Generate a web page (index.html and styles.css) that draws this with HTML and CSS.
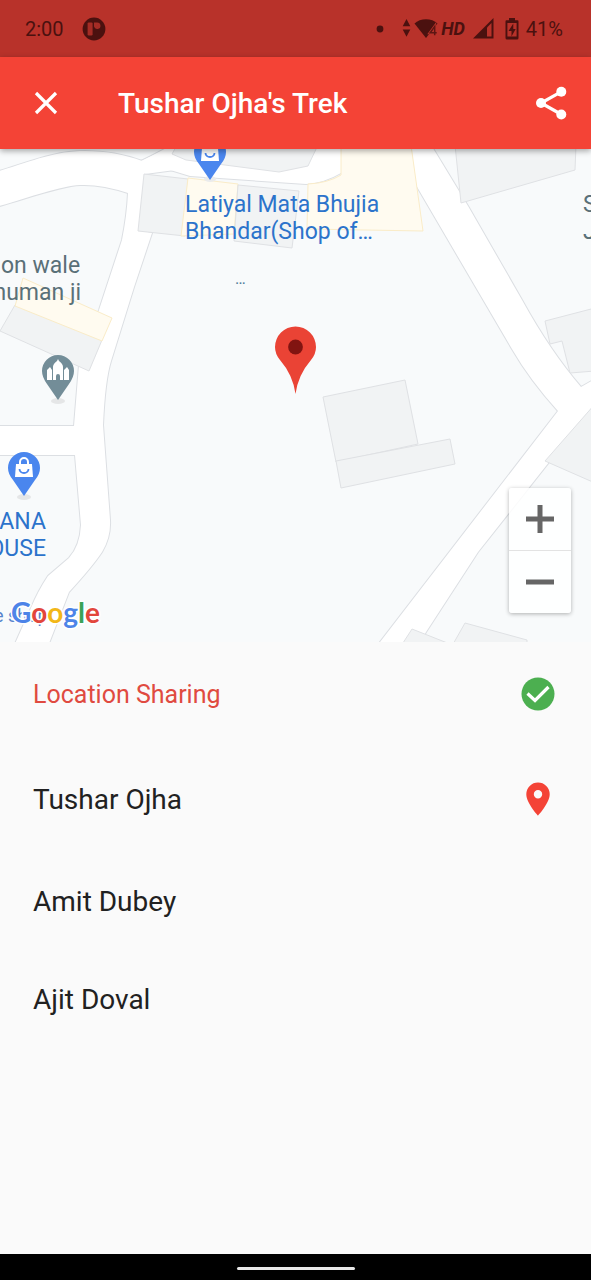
FILE: index.html
```html
<!DOCTYPE html>
<html lang="en">
<head>
<meta charset="utf-8">
<meta name="viewport" content="width=device-width, initial-scale=1">
<title>Tushar Ojha's Trek</title>
<link rel="stylesheet" href="styles.css">
</head>
<body>
<div class="screen">
  <div class="status-bar">
    <span class="status-time">2:00</span>
    <svg class="status-app" viewBox="0 0 24 24" aria-hidden="true">
      <circle cx="12" cy="12" r="11.4" fill="#4b110f"/>
      <rect x="5.600" y="5.400" width="5" height="13" rx="1.200" fill="#a52c25"/>
      <path d="M12 5.400h3.200a3.300 3.300 0 1 1-3.200 4.200z" fill="#a52c25"/>
    </svg>
    <svg class="status-dot" viewBox="0 0 8 8" aria-hidden="true"><circle cx="4" cy="4" r="3.4" fill="#4b110f"/></svg>
    <svg class="status-wifi" viewBox="0 0 36 22" aria-hidden="true">
      <path d="M4.5 1 8.3 8.300H.7zM4.500 18.800.7 11.500h7.600z" fill="#4b110f"/>
      <path d="M12.500 5.500C18-.2 30-.2 35.500 5.500L24 20z" fill="#4b110f"/>
      <path d="M32.700 17.200V8.500l-4.500 6.200h6.500" fill="none" stroke="#b8322a" stroke-width="3"/>
      <path d="M32.700 17.200V8.500l-4.500 6.200h6.500" fill="none" stroke="#5c1613" stroke-width="1.500"/>
    </svg>
    <span class="status-hd">HD</span>
    <svg class="status-signal" viewBox="0 0 22 22" aria-hidden="true">
      <path d="M0 20.500 20.500 0v20.500z" fill="#4b110f"/>
      <path d="M14 9.500 18.500 5v13.500H14z" fill="#b8322a"/>
    </svg>
    <svg class="status-battery" viewBox="0 0 14 22" aria-hidden="true">
      <path d="M4 0h6v2.200h2.500Q13.500 2.200 13.500 3.400V20q0 1.500-1.500 1.500H2Q.5 21.500.5 20V3.400Q.5 2.200 1.500 2.200H4z" fill="#4b110f"/>
      <path d="M2.400 5h9.200v13.500H2.400z" fill="#b8322a"/>
      <path d="M8.300 5.500 3.500 13h3v5.500L10.700 11h-2.400z" fill="#4b110f"/>
    </svg>
    <span class="status-charge">41%</span>
  </div>

  <header class="app-bar">
    <button class="icon-button" type="button" aria-label="Close">
      <svg class="close-icon" viewBox="0 0 24 24" aria-hidden="true"><path d="M2 2l20 20M22 2 2 22" fill="none" stroke="#fff" stroke-width="3.200"/></svg>
    </button>
    <h1 class="title">Tushar Ojha's Trek</h1>
    <button class="icon-button share-button" type="button" aria-label="Share">
      <svg class="share-icon" viewBox="0 0 32 34" aria-hidden="true">
        <path d="M26.500 5.700 6 17l20.500 11.500" fill="none" stroke="#fff" stroke-width="3.200"/>
        <circle cx="26.300" cy="5.700" r="5" fill="#fff"/><circle cx="6" cy="17" r="5" fill="#fff"/><circle cx="26.300" cy="28.500" r="5" fill="#fff"/>
      </svg>
    </button>
  </header>

  <section class="map" aria-label="Map">
    <svg class="map-canvas" viewBox="0 149 591 493" preserveAspectRatio="xMidYMid slice">
      <defs>
        <g id="roads">
          <path d="M-4 172C32 161 55 151 85 151C107 151 126 155 142 161L172 145H345L341 168L320 175L279 172L190 168L145 174L139 230L152 233L134 287L111 361Q105 380 103 425L110 520Q111 537 102 552Q92 567 69 592L48 646H14L31 608Q38 591 48 576L69 558Q80 546 81 525L75 455H-4V426H74L79 365L99 310L122 240Q127 215 128 193Q101 184 80 185C60 186 28 198-4 207Z"/>
          <path d="M141 161 175 145H345L341 173Q324 183 306 184L190 176Z"/>
          <path d="M411 145H431L468 206L522 300Q550 351 581 387L595 379V404L478 552L426 632L418 646H377L558 411Q530 380 512 349L416 185Z"/>
        </g>
      </defs>
      <rect y="149" width="591" height="493" fill="#f8fafb"/>
      <use href="#roads" class="road-edge"/>
      <use href="#roads" class="road-fill"/>
      <path d="M172 154 177 145H318L308 166 279 172 186 160Z" class="building"/>
      <path d="M144 174 188 179 185 236 138 231Z" class="building"/>
      <path d="M188 178 238 184 234 234 181 236Z" class="shop"/>
      <path d="M238 185 299 191 292 248 234 241Z" class="building"/>
      <path d="M341 145H411L423 231 307 229 308 184Q328 183 341 175Z" class="shop"/>
      <path d="M455 145 461 203 575 170 576 145Z" class="building"/>
      <path d="M545 321 595 308V371L570 373 562 341 550 344Z" class="building"/>
      <path d="M545 461 595 404V483Z" class="building"/>
      <path d="M323 397 405 380 418 444 336 462Z" class="building"/>
      <path d="M336 461 450 439 455 464 341 488Z" class="building"/>
      <path d="M401 646 412 629 455 646ZM452 646 465 623 527 640V646Z" class="building"/>
      <path d="M15 305 102 340 89 371 0 331Z" class="building"/>
      <path d="M23 278 112 318 102 341 15 306Z" class="shop"/>

      <g class="place place-blue">
        <text x="185" y="212">Latiyal Mata Bhujia</text>
        <text x="185" y="239">Bhandar(Shop of…</text>
        <text x="46" y="529" text-anchor="end">KHANA</text>
        <text x="46" y="556" text-anchor="end">HOUSE</text>
      </g>
      <g class="place place-gray">
        <text x="1" y="273">on wale</text>
        <text x="81" y="300" text-anchor="end">Hanuman ji</text>
        <text x="583" y="212">S</text>
        <text x="583" y="239">J</text>
      </g>
      <text x="235" y="284" class="place-more">…</text>

      <ellipse cx="210" cy="179" rx="6" ry="3" fill="#eaebec"/>
      <ellipse cx="24" cy="497" rx="7" ry="3" fill="#e5e6e7"/>
      <ellipse cx="58" cy="401" rx="7" ry="3" fill="#e5e6e7"/>
      <g id="shop-pin">
        <path d="M24 496 13 480Q8 474 8 468A16 16 0 0 1 40 468Q40 474 35 480Z" fill="#4a86ee"/>
        <path d="M16 464H32L33 477H15Z" fill="#fff"/>
        <path d="M20 465V462a4 4 0 0 1 8 0v3" fill="none" stroke="#fff" stroke-width="2"/>
        <path d="M19.500 469a4.500 4 0 0 0 9 0" fill="none" stroke="#4a86ee" stroke-width="1.800"/>
      </g>
      <use href="#shop-pin" x="186" y="-316"/>
      <path d="M58 400 47 384Q42 377 42 371A16 16 0 0 1 74 371Q74 377 69 384Z" fill="#738d98"/>
      <path d="M47 380V370l3-3 2 3v10zM53 380V367q0-3 4-6l1-2 1 2q4 3 4 6v13h-3v-4a2 2 0 0 0-4 0v4zM64 380V370l3-3 2 3v10z" fill="#fff"/>

      <path d="M295.500 394Q293 375 280 360Q275 354 275 347A20.500 20.500 0 0 1 316 347Q316 354 311 360Q298 375 295.500 394Z" fill="#ea4335"/>
      <circle cx="295.500" cy="347" r="7.400" fill="#811411"/>

      <text x="-6" y="622" class="place-small">e shop</text>
      <text x="11" y="623" class="google"><tspan fill="#4d84e8">G</tspan><tspan fill="#e2463c">o</tspan><tspan fill="#f2b719">o</tspan><tspan fill="#4d84e8">g</tspan><tspan fill="#3ba257">l</tspan><tspan fill="#e2463c">e</tspan></text>
    </svg>
    <div class="zoom-control">
      <button class="zoom-button" type="button" aria-label="Zoom in"><svg viewBox="0 0 28 28" aria-hidden="true"><path d="M14 0v28M0 14h28" stroke="#666" stroke-width="5"/></svg></button>
      <button class="zoom-button" type="button" aria-label="Zoom out"><svg viewBox="0 0 28 28" aria-hidden="true"><path d="M0 14h28" stroke="#666" stroke-width="5"/></svg></button>
    </div>
  </section>

  <main class="people">
    <div class="sharing-row">
      <h2 class="sharing-title">Location Sharing</h2>
      <svg class="row-icon" viewBox="0 0 34 34" role="img" aria-label="On">
        <circle cx="17" cy="17" r="16.500" fill="#4caf50"/>
        <path d="M6.500 16.500l7.500 7L27.500 10" fill="none" stroke="#fff" stroke-width="3.200"/>
      </svg>
    </div>
    <ul class="people-list">
      <li class="person person-located">
        <span>Tushar Ojha</span>
        <svg class="row-icon" viewBox="0 0 34 34" role="img" aria-label="Location">
          <path d="M17 .5A11.700 11.700 0 0 0 5.300 12.200C5.300 21 17 33.500 17 33.500S28.700 21 28.700 12.200A11.700 11.700 0 0 0 17 .5Zm0 15.900a4.200 4.200 0 1 1 0-8.400 4.200 4.200 0 0 1 0 8.400Z" fill="#f44336"/>
        </svg>
      </li>
      <li class="person">Amit Dubey</li>
      <li class="person">Ajit Doval</li>
    </ul>
  </main>

  <div class="nav-bar"><div class="nav-handle"></div></div>
</div>
</body>
</html>
```
FILE: styles.css
```css
* {
  box-sizing: border-box;
}

body {
  margin: 0;
  background: #fafafa;
  color: #212121;
  font-family: Roboto, "Liberation Sans", sans-serif;
}

h1, h2, ul {
  margin: 0;
  padding: 0;
}

button {
  padding: 0;
  border: 0;
  background: none;
}

svg {
  display: block;
  flex: none;
}

.screen {
  display: flex;
  flex-direction: column;
  min-height: 100vh;
}

.status-bar {
  display: flex;
  align-items: center;
  height: 57px;
  padding: 0 28px 0 25px;
  background: #b8322a;
  color: #4b110f;
  font-size: 20px;
}

.status-app {
  width: 24px;
  height: 24px;
  margin-left: 18px;
}

.status-dot {
  width: 8px;
  height: 8px;
  margin-left: auto;
}

.status-wifi {
  width: 36px;
  height: 22px;
  margin-left: 18px;
}

.status-hd {
  margin-left: 3px;
  font-size: 18px;
  font-style: italic;
  font-weight: 700;
}

.status-signal {
  width: 22px;
  height: 22px;
  margin-left: 8px;
}

.status-battery {
  width: 14px;
  height: 22px;
  margin-left: 10px;
}

.status-charge {
  margin-left: 7px;
}

.app-bar {
  position: relative;
  z-index: 1;
  display: flex;
  align-items: center;
  height: 92px;
  padding: 0 16px 0 22px;
  background: #f44336;
  color: #fff;
  box-shadow: 0 2px 6px rgba(0, 0, 0, 0.35);
}

.icon-button {
  display: grid;
  place-items: center;
  width: 48px;
  height: 48px;
}

.close-icon {
  width: 24px;
  height: 24px;
}

.title {
  flex: 1;
  margin-left: 48px;
  font-size: 28px;
  font-weight: 500;
}

.share-icon {
  width: 32px;
  height: 34px;
}

.map {
  position: relative;
  height: 493px;
}

.map-canvas {
  width: 100%;
  height: 100%;
}

.road-edge {
  fill: none;
  stroke: #dcdfe3;
  stroke-width: 2;
}

.road-fill {
  fill: #fff;
}

.building {
  fill: #f1f3f4;
  stroke: #dfe1e4;
}

.shop {
  fill: #fffbf0;
  stroke: #faecc8;
}

.place {
  font-size: 23px;
}

.place-blue {
  fill: #2c73cb;
}

.place-gray {
  fill: #5a7078;
}

.place-more {
  fill: #4f7a99;
  font-size: 16px;
}

.place-small {
  fill: #5683cc;
  font-size: 18px;
}

.google {
  font-family: Lato, sans-serif;
  font-size: 28px;
  font-weight: 700;
  stroke: #fff;
  stroke-width: 3px;
  paint-order: stroke;
}

.zoom-control {
  position: absolute;
  right: 20px;
  bottom: 29px;
  width: 62px;
  border-radius: 3px;
  background: rgba(255, 255, 255, 0.85);
  box-shadow: 0 1px 4px rgba(0, 0, 0, 0.3);
}

.zoom-button {
  display: grid;
  place-items: center;
  width: 100%;
  height: 62px;
}

.zoom-button + .zoom-button {
  height: 63px;
  border-top: 1px solid #e3e3e3;
}

.zoom-button svg {
  width: 28px;
  height: 28px;
}

.people {
  flex: 1;
}

.sharing-row,
.person {
  display: flex;
  align-items: center;
  justify-content: space-between;
  padding: 0 36px 0 33px;
}

.sharing-row {
  height: 104px;
}

.sharing-title {
  color: #e04a40;
  font-size: 25px;
  font-weight: 400;
}

.people-list {
  list-style: none;
}

.person {
  height: 98px;
  font-size: 28px;
}

.person-located {
  height: 106px;
}

.row-icon {
  width: 34px;
  height: 34px;
}

.nav-bar {
  display: grid;
  place-items: center;
  height: 26px;
  padding-top: 3px;
  background: #000;
}

.nav-handle {
  width: 118px;
  height: 3px;
  border-radius: 2px;
  background: #e8e8e8;
}
```
